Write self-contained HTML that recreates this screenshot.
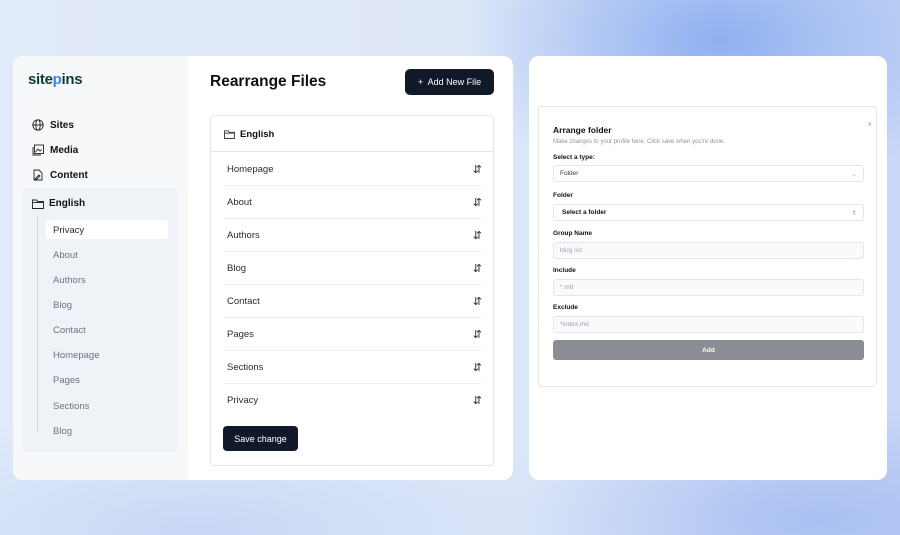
<!DOCTYPE html><html><head><style>
*{box-sizing:border-box;margin:0;padding:0}
body{width:900px;height:535px;overflow:hidden;font-family:"Liberation Sans",sans-serif;position:relative;
background:radial-gradient(ellipse 260px 160px at 720px 40px,#8fb0f0 0%,rgba(160,190,245,0) 100%),radial-gradient(ellipse 300px 120px at 820px 520px,#a8bff2,rgba(168,191,242,0)),radial-gradient(ellipse 400px 120px at 200px 530px,#c8d8f5,rgba(200,216,245,0)),linear-gradient(90deg,#e2ebf9,#dfe8f8 50%,#c9d8f6);}
.card{position:absolute;background:#fff;border-radius:10px;overflow:hidden}
.sb{position:absolute;left:0;top:0;width:175px;height:100%;background:#f7f8fa}
.nav{position:absolute;left:19px;font-size:10px;font-weight:bold;color:#111;display:flex;align-items:center;gap:6px}
.tree{position:absolute;left:9px;top:132px;width:156px;height:264px;background:#eff2f7;border-radius:4px}
.ti{position:absolute;font-size:9.5px;color:#6b7280}
.row{position:absolute;left:13px;width:258px;height:33px;border-bottom:1px solid #eef0f3;font-size:9.5px;color:#1f2937;display:flex;align-items:center;justify-content:space-between;padding:0 0 0 3px}
.row span{font-size:11px}
.lab{position:absolute;left:14px;font-size:6.5px;font-weight:bold;color:#111}
.inp{position:absolute;left:14px;width:311px;height:17px;border:1px solid #e3e6ea;border-radius:3px;font-size:6.5px;color:#9ca3af;padding-left:6px;display:flex;align-items:center}
</style></head><body>
<div class="card" style="left:13px;top:56px;width:500px;height:424px">
 <div class="sb">
  <div style="position:absolute;left:15px;top:15px;font-size:15px;font-weight:bold;color:#0f3b3a;letter-spacing:-0.3px">site<span style="color:#3b82f6">p</span>ins</div>
  <div class="nav" style="top:63px"><svg width="12" height="12" viewBox="0 0 12 12" fill="none" stroke="#222" stroke-width=".9"><circle cx="6" cy="6" r="5.2"/><ellipse cx="6" cy="6" rx="2.2" ry="5.2"/><path d="M1 6h10"/></svg>Sites</div>
  <div class="nav" style="top:88px"><svg width="12" height="12" viewBox="0 0 12 12" fill="none" stroke="#222" stroke-width=".9"><rect x="2.5" y="1" width="9" height="8.5"/><path d="M1 3v8h8"/><path d="M3.5 8l2.5-3 2 2 1.5-1.5"/></svg>Media</div>
  <div class="nav" style="top:113px"><svg width="12" height="12" viewBox="0 0 12 12" fill="none" stroke="#222" stroke-width=".9"><path d="M2 1h5l3 3v7H2z"/><path d="M3 10l4-4 1 1-4 4z"/></svg>Content</div>
  <div class="tree">
   <div style="position:absolute;left:10px;top:10px;font-size:10px;font-weight:bold;color:#111;display:flex;align-items:center;gap:5px"><svg width="12" height="10" viewBox="0 0 12 10" fill="none" stroke="#222" stroke-width=".9"><path d="M.5 1h4l1 1.5h6v7H.5z"/><path d="M.5 3.5h11"/></svg>English</div>
   <div style="position:absolute;left:15px;top:28px;width:1px;height:216px;background:#cfd4db"></div>
   <div style="position:absolute;left:24px;top:32px;width:122px;height:19px;background:#fff;border-radius:3px"></div>
   <div class="ti" style="top:37px;left:31px;color:#1f2937">Privacy</div>
   <div class="ti" style="top:62px;left:31px">About</div>
   <div class="ti" style="top:87px;left:31px">Authors</div>
   <div class="ti" style="top:112px;left:31px">Blog</div>
   <div class="ti" style="top:137px;left:31px">Contact</div>
   <div class="ti" style="top:162px;left:31px">Homepage</div>
   <div class="ti" style="top:187px;left:31px">Pages</div>
   <div class="ti" style="top:213px;left:31px">Sections</div>
   <div class="ti" style="top:238px;left:31px">Blog</div>
  </div>
 </div>
 <div style="position:absolute;left:197px;top:17px;font-size:15.5px;font-weight:bold;color:#111">Rearrange Files</div>
 <div style="position:absolute;left:392px;top:13px;width:89px;height:26px;background:#111827;border-radius:5px;color:#fff;font-size:9px;display:flex;align-items:center;justify-content:center">+&nbsp; Add New File</div>
 <div style="position:absolute;left:197px;top:59px;width:284px;height:351px;border:1px solid #e3e6ea;border-radius:4px">
  <div style="position:absolute;left:13px;top:13px;font-size:9.5px;font-weight:bold;color:#111;display:flex;align-items:center;gap:5px"><svg width="11" height="9" viewBox="0 0 12 10" fill="none" stroke="#222" stroke-width=".9"><path d="M.5 1h4l1 1.5h6v7H.5z"/><path d="M.5 3.5h11"/></svg>English</div>
  <div style="position:absolute;left:0;top:35px;width:100%;height:1px;background:#e3e6ea"></div>
  <div class="row" style="top:37px">Homepage<span>⇵</span></div>
  <div class="row" style="top:70px">About<span>⇵</span></div>
  <div class="row" style="top:103px">Authors<span>⇵</span></div>
  <div class="row" style="top:136px">Blog<span>⇵</span></div>
  <div class="row" style="top:169px">Contact<span>⇵</span></div>
  <div class="row" style="top:202px">Pages<span>⇵</span></div>
  <div class="row" style="top:235px">Sections<span>⇵</span></div>
  <div class="row" style="top:268px;border:none">Privacy<span>⇵</span></div>
  <div style="position:absolute;left:12px;top:310px;width:75px;height:25px;background:#111827;border-radius:4px;color:#fff;font-size:9px;display:flex;align-items:center;justify-content:center">Save change</div>
 </div>
</div>
<div class="card" style="left:529px;top:56px;width:358px;height:424px">
 <div style="position:absolute;left:9px;top:50px;width:339px;height:281px;border:1px solid #e3e6ea;border-radius:4px">
  <div style="position:absolute;left:14px;top:18px;font-size:8.5px;font-weight:bold;color:#111">Arrange folder</div>
  <div style="position:absolute;right:4px;top:13px;font-size:8px;color:#999">×</div>
  <div style="position:absolute;left:14px;top:32px;font-size:6px;color:#8b95a5">Make changes to your profile here. Click save when you're done.</div>
  <div class="lab" style="top:47px">Select a type:</div>
  <div class="inp" style="top:58px;color:#374151;justify-content:space-between;padding-right:6px">Folder<span style="color:#aaa">⌄</span></div>
  <div class="lab" style="top:85px">Folder</div>
  <div class="inp" style="top:97px;color:#111;font-weight:bold;padding-left:8px;justify-content:space-between;padding-right:6px">Select a folder<span style="color:#aaa;font-weight:normal">⇕</span></div>
  <div class="lab" style="top:123px">Group Name</div>
  <div class="inp" style="top:135px;background:#f9fafb">blog list</div>
  <div class="lab" style="top:160px">Include</div>
  <div class="inp" style="top:172px;background:#f9fafb">*.md</div>
  <div class="lab" style="top:197px">Exclude</div>
  <div class="inp" style="top:209px;background:#f9fafb">*index.md</div>
  <div style="position:absolute;left:14px;top:233px;width:311px;height:20px;background:#8a8d93;border-radius:3px;color:#fff;font-size:6.5px;font-weight:bold;display:flex;align-items:center;justify-content:center">Add</div>
 </div>
</div>
</body></html>
